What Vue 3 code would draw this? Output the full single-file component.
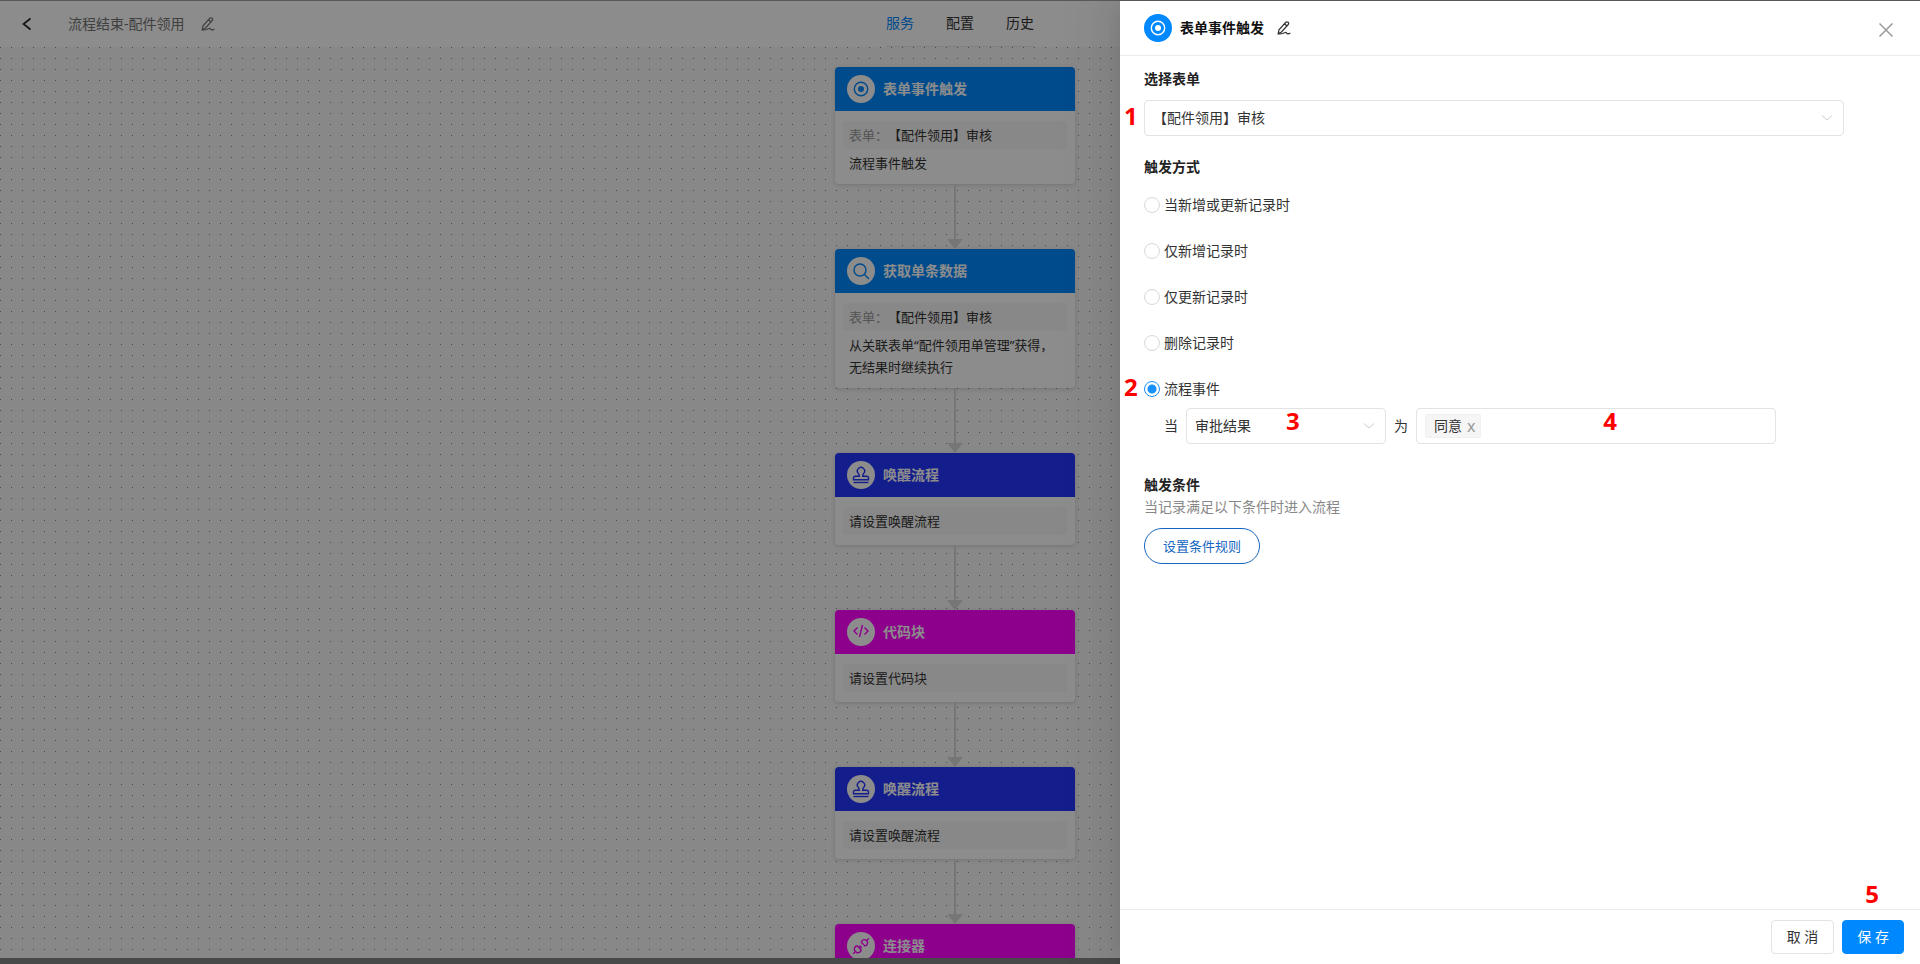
<template>
  <div class="page">
    <header class="topbar">
      <div class="topbar-left">
        <button class="icon-btn back" aria-label="返回">
          <svg width="12" height="14" viewBox="0 0 12 14"><path d="M9.5 1.5 2.500 7l7 5.500" /></svg>
        </button>
        <span class="flow-name">流程结束-配件领用</span>
        <button class="icon-btn" aria-label="编辑">
          <svg width="14" height="14" viewBox="0 0 14 14"><path :d="editPath" /></svg>
        </button>
      </div>
      <nav class="tabs">
        <a
          v-for="tab in tabs"
          :key="tab"
          href="#"
          :class="{ active: tab === activeTab }"
          @click.prevent="activeTab = tab"
          >{{ tab }}</a
        >
      </nav>
    </header>

    <main class="canvas">
      <template v-for="(node, i) in nodes" :key="i">
        <div v-if="i > 0" class="connector"></div>
        <article class="node">
          <h3 class="node-head" :class="node.theme">
            <span class="badge">
              <svg width="18" height="18" viewBox="0 0 18 18">
                <path v-for="d in icons[node.icon]" :key="d" :d="d" />
                <circle v-if="node.icon === 'target'" cx="9" cy="9" r="3" class="solid" />
              </svg>
            </span>
            {{ node.title }}
          </h3>
          <div v-if="node.form || node.tip" class="node-body">
            <p class="node-box">
              <span v-if="node.form" class="muted">表单：</span>{{ node.form || node.tip }}
            </p>
            <p v-if="node.desc" class="node-desc">{{ node.desc }}</p>
          </div>
        </article>
      </template>
    </main>

    <div class="mask"></div>

    <aside class="drawer">
      <header class="drawer-head">
        <span class="badge blue">
          <svg width="18" height="18" viewBox="0 0 18 18">
            <path :d="icons.target[0]" />
            <circle cx="9" cy="9" r="3" class="solid" />
          </svg>
        </span>
        <h2>表单事件触发</h2>
        <button class="icon-btn" aria-label="编辑">
          <svg width="14" height="14" viewBox="0 0 14 14"><path :d="editPath" /></svg>
        </button>
        <button class="icon-btn close" aria-label="关闭">
          <svg width="14" height="14" viewBox="0 0 14 14"><path d="M.5.5l13 13M13.5.5l-13 13" /></svg>
        </button>
      </header>

      <div class="drawer-body">
        <label class="label" for="form">选择表单</label>
        <div class="select form-select">
          <i class="step step-left">1</i>
          <select id="form">
            <option>【配件领用】审核</option>
          </select>
          <svg width="12" height="8" viewBox="0 0 12 8"><path d="M1 1.500l5 4.500 5-4.500" /></svg>
        </div>

        <h4 id="trigger" class="label">触发方式</h4>
        <div class="radios" role="radiogroup" aria-labelledby="trigger">
          <label v-for="item in triggers" :key="item" class="radio">
            <i v-if="item === '流程事件'" class="step step-left">2</i>
            <input v-model="trigger" type="radio" name="trigger" :value="item" />
            {{ item }}
          </label>
        </div>

        <div class="event-row">
          <label for="event">当</label>
          <div class="select event-select">
            <select id="event">
              <option>审批结果</option>
            </select>
            <svg width="12" height="8" viewBox="0 0 12 8"><path d="M1 1.500l5 4.500 5-4.500" /></svg>
            <i class="step step-event">3</i>
          </div>
          <label for="result">为</label>
          <div class="tag-input">
            <span class="tag">同意<button aria-label="移除">x</button></span>
            <input id="result" type="text" />
            <i class="step step-result">4</i>
          </div>
        </div>

        <h4 class="label">触发条件</h4>
        <p class="hint">当记录满足以下条件时进入流程</p>
        <button class="rule-btn">设置条件规则</button>
      </div>

      <footer class="drawer-foot">
        <button class="btn">取 消</button>
        <div class="save">
          <i class="step step-save">5</i>
          <button class="btn primary">保 存</button>
        </div>
      </footer>
    </aside>
  </div>
</template>

<script setup>
import { ref } from "vue";

const tabs = ["服务", "配置", "历史"];
const activeTab = ref("服务");

const triggers = ["当新增或更新记录时", "仅新增记录时", "仅更新记录时", "删除记录时", "流程事件"];
const trigger = ref("流程事件");

const nodes = [
  { title: "表单事件触发", icon: "target", theme: "blue", form: "【配件领用】审核", desc: "流程事件触发" },
  {
    title: "获取单条数据",
    icon: "search",
    theme: "blue",
    form: "【配件领用】审核",
    desc: "从关联表单“配件领用单管理”获得，无结果时继续执行",
  },
  { title: "唤醒流程", icon: "stamp", theme: "indigo", tip: "请设置唤醒流程" },
  { title: "代码块", icon: "code", theme: "magenta", tip: "请设置代码块" },
  { title: "唤醒流程", icon: "stamp", theme: "indigo", tip: "请设置唤醒流程" },
  { title: "连接器", icon: "link", theme: "magenta" },
];

const editPath =
  "M1.200 12.600 2 8.800 8.800 1.300q1.200-1 2.300 0t.1 2.200L4.500 11ZM7.500 2.800l2.200 2M1.200 12.800c3 .8 5-.6 7-1.300 1.700-.5 1.200 1.300 2.600 1.300 1 0 1.500-.5 2.700-.3";

const icons = {
  target: ["M9 2.300a6.700 6.700 0 1 0 0 13.400a6.700 6.700 0 1 0 0-13.400Z"],
  search: ["M8 2a6 6 0 1 0 0 12a6 6 0 1 0 0-12Z", "M12.400 12.400l4.600 4.600"],
  stamp: [
    "M7.300 10.200Q7.300 8.700 6.300 7.400A3.600 3.600 0 1 1 11.700 7.400Q10.700 8.700 10.700 10.200H14.500Q16.500 10.200 16.500 12V13.700H1.500V12Q1.500 10.200 3.500 10.200Z",
    "M1.500 16.500H16.500",
  ],
  code: ["M5.500 4.500 2 8l3.500 3.500", "M12.500 4.500 16 8l-3.500 3.500", "M10.500 2 7.500 14"],
  link: [
    "M9.300 5.300 12.900 8.900C14.200 9 16.300 7 15.300 4.600L13.600 2.900C11.300 1.900 9.200 4 9.300 5.300Z",
    "M5 8.800 9.200 13C8.800 15 6.300 16.400 4.400 15.300L2.700 13.600C1.600 11.700 3 9.200 5 8.800Z",
    "M14.500 3.700 17 1.200M3.500 14.500 1.200 16.800M6.600 10.400 8.600 8.400M7.900 11.700 9.900 9.700",
  ],
};
</script>

<style>
body {
  margin: 0;
}
</style>

<style scoped>
.page {
  position: relative;
  display: flex;
  flex-direction: column;
  box-sizing: border-box;
  height: 100vh;
  padding-bottom: 6px;
  overflow: hidden;
  border-top: 1px solid #595757;
  background: #838585;
  color: #333;
  font-family: "Noto Sans", "Noto Sans CJK SC", sans-serif;
  font-size: 14px;
  line-height: 22px;
  text-spacing-trim: space-all;
}
h2,
h3,
h4,
p {
  margin: 0;
  font-size: 14px;
}
button,
input,
select {
  box-sizing: border-box;
  margin: 0;
  color: inherit;
  font: inherit;
}
button {
  cursor: pointer;
}
svg {
  display: block;
  fill: none;
  stroke: currentColor;
}
.solid {
  fill: currentColor;
  stroke: none;
}
.icon-btn {
  padding: 0;
  border: 0;
  background: none;
}
.icon-btn svg {
  stroke-width: 1.2;
}

/* top bar */
.topbar {
  display: grid;
  grid-template-columns: 1fr auto 1fr;
  height: 46px;
  background: #fff;
}
.topbar-left {
  display: flex;
  align-items: center;
  padding-left: 21px;
  color: #757575;
}
.back {
  color: #222;
}
.back svg {
  stroke-width: 1.6;
}
.flow-name {
  margin: 0 16px 0 35px;
}
.tabs {
  display: flex;
  gap: 32px;
  box-sizing: border-box;
  border-bottom: 1px solid #e8e8e8;
  line-height: 44px;
}
.tabs a {
  color: #333;
  text-decoration: none;
}
.tabs a.active {
  color: #0089ff;
}

/* flow canvas */
.canvas {
  display: flex;
  flex: 1;
  flex-direction: column;
  align-items: center;
  min-height: 0;
  padding: 20px 10px 0 0;
  overflow: hidden;
  background: #f7f7f7 conic-gradient(at 1px 1px, transparent 75%, #888 0) 0 0 / 11px 11px;
}
.node {
  flex: none;
  width: 240px;
  border-radius: 4px;
  background: #fff;
  box-shadow: 0 1px 4px rgba(0, 0, 0, 0.15);
}
.node-head {
  display: flex;
  align-items: center;
  gap: 8px;
  height: 44px;
  padding-left: 12px;
  border-radius: 4px 4px 0 0;
  color: #fff;
}
.blue {
  --theme: #0089ff;
  background: #0089ff;
}
.indigo {
  --theme: #2438ff;
  background: #2438ff;
}
.magenta {
  --theme: #ff00ff;
  background: #ff00ff;
}
.badge {
  display: flex;
  align-items: center;
  justify-content: center;
  width: 28px;
  height: 28px;
  border-radius: 50%;
  background: #fff;
  color: var(--theme);
}
.badge svg {
  stroke-width: 1.4;
}
.badge.blue {
  background: #0089ff;
  color: #fff;
}
.node-body {
  padding: 10px 8px;
}
.node-body p {
  padding: 0 6px;
  font-size: 13px;
}
.node-body .node-box {
  border-radius: 4px;
  background: #f8f8f8;
  line-height: 28px;
}
.node-body .node-desc {
  padding-top: 3px;
}
.muted {
  color: #999;
}
.connector {
  display: flex;
  flex: none;
  flex-direction: column;
  align-items: center;
  height: 65px;
}
.connector::before {
  content: "";
  flex: 1;
  width: 2px;
  background: #d8d8d8;
}
.connector::after {
  content: "";
  border: 8px solid transparent;
  border-top: 10px solid #d8d8d8;
  border-bottom: 0;
}

.mask {
  position: absolute;
  inset: 0;
  background: rgba(0, 0, 0, 0.45);
}

/* drawer */
.drawer {
  position: absolute;
  top: 0;
  right: 0;
  bottom: 0;
  display: flex;
  flex-direction: column;
  width: 800px;
  max-width: 100%;
  background: #fff;
  box-shadow: -6px 0 16px -8px rgba(0, 0, 0, 0.08), -9px 0 28px rgba(0, 0, 0, 0.05),
    -12px 0 48px 16px rgba(0, 0, 0, 0.03);
}
.drawer-head {
  display: flex;
  align-items: center;
  height: 54px;
  padding: 0 27px 0 24px;
  border-bottom: 1px solid #ebebeb;
}
.drawer-head h2 {
  margin: 0 13px 0 8px;
  color: #111;
}
.drawer-head .close {
  margin-left: auto;
  padding-top: 4px;
  color: #999;
}
.close svg {
  stroke-width: 1.5;
}
.drawer-body {
  flex: 1;
  padding: 12px 24px;
}
.label {
  display: block;
  color: #222;
  font-weight: 700;
}
.select {
  position: relative;
}
.select select {
  display: block;
  width: 100%;
  height: 36px;
  padding: 0 32px 0 8px;
  border: 1px solid #e3e3e3;
  border-radius: 4px;
  background: #fff;
  appearance: none;
}
.select svg {
  position: absolute;
  top: 14px;
  right: 11px;
  color: #ccc;
  pointer-events: none;
}
.form-select {
  max-width: 700px;
  margin: 10px 0 20px;
}
.radios {
  display: flex;
  flex-direction: column;
  gap: 24px;
  margin: 16px 0 8px;
}
.radio {
  position: relative;
  display: flex;
  align-items: center;
  gap: 4px;
}
.radio input {
  width: 16px;
  height: 16px;
  border: 1px solid #d9d9d9;
  border-radius: 50%;
  background: #fff;
  appearance: none;
}
.radio input:checked {
  border-color: #1890ff;
  background: radial-gradient(circle, #1890ff 4px, transparent 5px);
}
.event-row {
  display: flex;
  align-items: center;
  gap: 8px;
  margin: 0 0 30px 20px;
}
.event-select {
  width: 200px;
}
.tag-input {
  position: relative;
  display: flex;
  align-items: center;
  box-sizing: border-box;
  width: 360px;
  height: 36px;
  padding: 0 8px;
  border: 1px solid #e3e3e3;
  border-radius: 4px;
}
.tag-input input {
  flex: 1;
  min-width: 0;
  border: 0;
  outline: 0;
  background: none;
}
.tag {
  display: flex;
  flex: none;
  gap: 5px;
  padding: 0 5px 0 8px;
  border: 1px solid #f0f0f0;
  border-radius: 2px;
  background: #f5f5f5;
}
.tag button {
  padding: 0;
  border: 0;
  background: none;
  color: #999;
  font-size: 16px;
}
.hint {
  color: #888;
}
.rule-btn {
  height: 36px;
  margin-top: 10px;
  padding: 0 18px;
  border: 1px solid #1565c0;
  border-radius: 18px;
  background: #fff;
  color: #1565c0;
  font-size: 13px;
}
.drawer-foot {
  display: flex;
  justify-content: flex-end;
  gap: 8px;
  padding: 10px 16px;
  border-top: 1px solid #ebebeb;
}
.save {
  position: relative;
}
.btn {
  height: 34px;
  padding: 0 15px;
  border: 1px solid #e3e3e3;
  border-radius: 4px;
  background: #fff;
}
.btn.primary {
  padding: 0 14px;
  border-color: #0089ff;
  background: #0089ff;
  color: #fff;
}

/* red step numbers laid over the form */
.step {
  position: absolute;
  color: #f00;
  font-family: "Open Sans", "Noto Sans", sans-serif;
  font-size: 24px;
  font-style: normal;
  font-weight: 700;
  line-height: 24px;
  pointer-events: none;
}
.step-left {
  top: 50%;
  left: -20px;
  margin-top: -14px;
}
.step-event {
  top: 1px;
  left: 50%;
}
.step-result {
  top: 0;
  left: 52%;
}
.step-save {
  top: -38px;
  left: 23px;
}
</style>
